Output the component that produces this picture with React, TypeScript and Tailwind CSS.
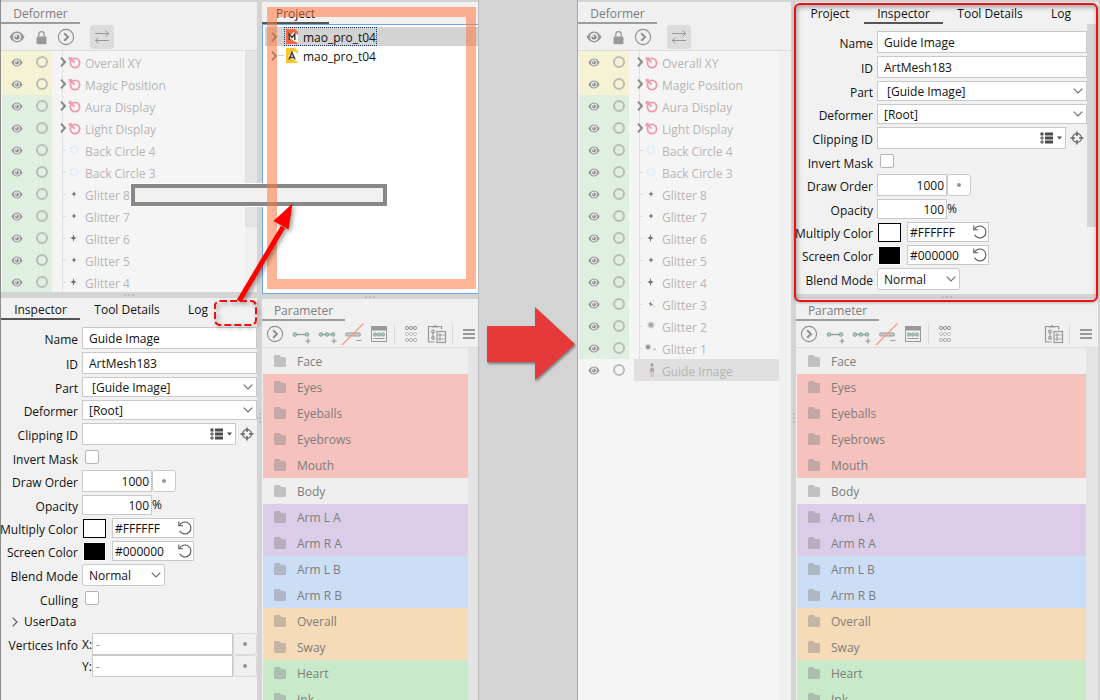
import React from "react";

type Tab = { label: string; width: string; active?: boolean };

const TEXT_DIM = "text-[#7d7d7d]";

function Tabs({ tabs, dim = false }: { tabs: Tab[]; dim?: boolean }) {
  return (
    <div role="tablist" className={`flex h-[22px] shrink-0 ${dim ? TEXT_DIM : "text-[#111111]"}`}>
      {tabs.map((t) => (
        <button
          key={t.label}
          type="button"
          role="tab"
          aria-selected={!!t.active}
          className={`${t.width} shrink-0 whitespace-nowrap border-b-2 pt-1 text-center ${
            t.active ? (dim ? "border-[#9d9d9d]" : "border-[#555555]") : "border-transparent"
          }`}
        >
          {t.label}
        </button>
      ))}
    </div>
  );
}

function Eye({ large = false }: { large?: boolean }) {
  return (
    <svg
      viewBox="0 0 16 12"
      className={large ? "h-[12px] w-[16px]" : "h-[9px] w-[12px]"}
      aria-hidden="true"
    >
      <path d="M0.5 6C2.6 2.3 5.1 0.6 8 0.6S13.4 2.3 15.5 6C13.4 9.7 10.9 11.4 8 11.4S2.6 9.7 0.5 6Z" fill="#999999" />
      <circle cx="8" cy="6" r="3.9" fill="#f4f4f4" />
      <circle cx="8" cy="6" r="2.6" fill="#8e8e8e" />
      <path d="M6 6a2 2 0 0 1 2-2v2z" fill="#f4f4f4" />
    </svg>
  );
}

function CircleChevron() {
  return (
    <svg viewBox="0 0 18 18" className="h-[18px] w-[18px]" fill="none" aria-hidden="true">
      <circle cx="9" cy="9" r="7.6" stroke="#8f8f8f" strokeWidth="1.1" />
      <path d="M7.2 5.2L11 9L7.2 12.8" stroke="#8f8f8f" strokeWidth="2" />
    </svg>
  );
}

function Down() {
  return (
    <svg
      viewBox="0 0 10 6"
      className="pointer-events-none absolute right-1 top-1/2 h-[6px] w-[10px] -translate-y-1/2"
      fill="none"
      aria-hidden="true"
    >
      <path d="M0.7 0.7L5 5L9.3 0.7" stroke="#6b6b6b" strokeWidth="1.1" />
    </svg>
  );
}

/* ---------- Deformer panel ---------- */

type Kind = "rotation" | "ring" | "spark" | "sparkBig" | "sparks" | "blob" | "blobs" | "figure";

const parts: { name: string; kind: Kind }[] = [
  { name: "Overall XY", kind: "rotation" },
  { name: "Magic Position", kind: "rotation" },
  { name: "Aura Display", kind: "rotation" },
  { name: "Light Display", kind: "rotation" },
  { name: "Back Circle 4", kind: "ring" },
  { name: "Back Circle 3", kind: "ring" },
  { name: "Glitter 8", kind: "spark" },
  { name: "Glitter 7", kind: "spark" },
  { name: "Glitter 6", kind: "sparkBig" },
  { name: "Glitter 5", kind: "spark" },
  { name: "Glitter 4", kind: "sparkBig" },
  { name: "Glitter 3", kind: "sparks" },
  { name: "Glitter 2", kind: "blob" },
  { name: "Glitter 1", kind: "blobs" },
  { name: "Guide Image", kind: "figure" },
];

function PartIcon({ kind }: { kind: Kind }) {
  return (
    <svg viewBox="0 0 16 16" className="h-4 w-4 shrink-0" fill="none" aria-hidden="true">
      {kind === "rotation" && (
        <g stroke="#ef9aaa" strokeWidth="1.8">
          <circle cx="9" cy="9" r="4.6" />
          <path d="M3 3.2L8.6 8.6" />
          <path d="M2.600 6L5.800 3.200" strokeWidth="1.4" />
        </g>
      )}
      {kind === "ring" && <circle cx="8" cy="8" r="3.6" stroke="#e6eef7" strokeWidth="2" />}
      {kind === "spark" && <path d="M8 5L8.7 7.3L10.6 8L8.7 8.7L8 11L7.3 8.7L5.4 8L7.3 7.3Z" fill="#6c6c6c" />}
      {kind === "sparkBig" && <path d="M7.5 4L8.3 7.1L10.8 8L8.3 8.9L7.5 12L6.7 8.9L4.2 8L6.7 7.1Z" fill="#6c6c6c" />}
      {kind === "sparks" && (
        <g>
          <path d="M7.500 5L8.400 7.400L10.200 8.400L8.400 9L7.800 10.800L7 8.600L5.200 7.800L7 7.200Z" fill="#7c7c7c" />
          <circle cx="10.4" cy="4.6" r="0.9" fill="#cccccc" />
          <circle cx="10.8" cy="10.4" r="0.9" fill="#cccccc" />
        </g>
      )}
      {kind === "blob" && (
        <g fill="#a6a6a6">
          <circle cx="8" cy="7" r="3.6" opacity="0.4" />
          <circle cx="8" cy="7" r="2.3" />
        </g>
      )}
      {kind === "blobs" && (
        <g fill="#969696">
          <circle cx="5" cy="7" r="2.9" opacity="0.4" />
          <circle cx="5" cy="7" r="1.9" />
          <circle cx="11.5" cy="9.2" r="1.2" opacity="0.5" />
        </g>
      )}
      {kind === "figure" && (
        <g>
          <path d="M6.500 3L9.200 1L11 3.400Z" fill="#8d8d9a" />
          <circle cx="9" cy="4" r="1.500" fill="#cdb3ae" />
          <path d="M7.600 6H10.600L11.400 9.400H6.800Z" fill="#9fa2b2" />
          <path d="M6 8.400L7.600 6.800V10.400H6.400Z" fill="#dcb4b4" />
          <path d="M8.200 9.500V15M10.200 9.500V15" stroke="#c9b0b0" strokeWidth="1" />
        </g>
      )}
    </svg>
  );
}

function PartRow({ name, kind, index }: { name: string; kind: Kind; index: number }) {
  const group = kind === "rotation";
  const selected = kind === "figure";
  const tint = index < 2 ? "bg-[#f5f3d3]" : selected ? "" : "bg-[#dfefe0]";
  return (
    <li className="flex h-[22px] shrink-0">
      <div className={`flex w-[50px] shrink-0 items-center pl-[9px] ${tint}`}>
        <button type="button" aria-label={`Show ${name}`} className="flex w-3 justify-center">
          <Eye />
        </button>
        <button type="button" aria-label={`Lock ${name}`} className="ml-[13px] h-3 w-3 rounded-full border-2 border-[#b9bdb6]" />
      </div>
      <div className={`ml-[5px] flex min-w-0 flex-1 items-center ${selected ? "bg-[#e0e0e0]" : ""}`}>
        <div className="flex h-full w-[9px] shrink-0 items-center">
          <span className="h-full w-[6px] shrink-0 border-r border-[#e0e0e0]" />
          {!group && !selected && <span className="h-px w-[3px] shrink-0 bg-[#dcdcdc]" />}
          {group && (
            <svg viewBox="0 0 7 12" className="h-3 w-[7px] shrink-0 -translate-x-[3px]" fill="none" aria-hidden="true">
              <path d="M1 1.6L5 6L1 10.4" stroke="#8a8a8a" strokeWidth="2" />
            </svg>
          )}
        </div>
        <PartIcon kind={kind} />
        <span className="ml-[3px] whitespace-nowrap pt-1 text-[#b5b5b5]">{name}</span>
      </div>
    </li>
  );
}

function DeformerPanel({ rows, thumb }: { rows: number; thumb: boolean }) {
  return (
    <section className="flex min-h-0 flex-1 flex-col bg-[#f0f0f0]">
      <Tabs dim tabs={[{ label: "Deformer", width: "w-[79px]", active: true }]} />
      <div className="flex h-[27px] shrink-0 items-center border-b border-[#dcdcdc] pl-2">
        <button type="button" aria-label="Toggle visibility" className="flex w-4 justify-center">
          <Eye large />
        </button>
        <button type="button" aria-label="Toggle lock" className="ml-2 flex w-4 justify-center">
          <svg viewBox="0 0 12 16" className="h-[15px] w-[11px]" aria-hidden="true">
            <path d="M3 7V4.6a3 3 0 0 1 6 0V7" fill="none" stroke="#999999" strokeWidth="1.4" />
            <rect x="0.6" y="7" width="10.8" height="8.4" rx="1.2" fill="#999999" />
          </svg>
        </button>
        <button type="button" aria-label="Expand" className="ml-2 flex w-[18px] justify-center">
          <CircleChevron />
        </button>
        <button
          type="button"
          aria-label="Swap"
          className="ml-[15px] flex h-6 w-6 items-center justify-center rounded-[3px] bg-[#dcdcdc]"
        >
          <svg viewBox="0 0 16 14" className="h-[14px] w-4" fill="none" stroke="#979797" aria-hidden="true">
            <path d="M1 3.500H14.500M11.500 0.500L14.600 3.500L11.500 6.500" />
            <path d="M15 10.500H1.500M4.500 7.500L1.400 10.500L4.500 13.500" />
          </svg>
        </button>
      </div>
      <div className="flex min-h-0 flex-1">
        <ul className="min-w-0 flex-1 overflow-hidden bg-[#f5f5f5] pl-px">
          {parts.slice(0, rows).map((p, i) => (
            <PartRow key={p.name} name={p.name} kind={p.kind} index={i} />
          ))}
        </ul>
        <div className="w-3 shrink-0 bg-[#f0f0f0]">{thumb && <div className="h-44 bg-[#e4e4e4]" />}</div>
      </div>
    </section>
  );
}

/* ---------- Inspector ---------- */

const FIELD = "min-w-0 border border-[#c9c9c9] bg-white text-[#111111] outline-none";

function Row({ label, id, h, children }: { label: string; id?: string; h: string; children: React.ReactNode }) {
  return (
    <div className={`flex ${h} shrink-0 items-center`}>
      <label htmlFor={id} className="flex w-[77px] shrink-0 justify-end whitespace-nowrap pt-1">
        {label}
      </label>
      <div className="ml-1 flex h-full min-w-0 flex-1 items-center">{children}</div>
    </div>
  );
}

function Dot({ label, flat = false }: { label: string; flat?: boolean }) {
  return (
    <button
      type="button"
      aria-label={label}
      className={`flex h-[22px] w-6 shrink-0 items-center justify-center rounded-[3px] border ${
        flat ? "border-[#dadada] bg-[#f0f0f0]" : "border-[#c9c9c9] bg-white"
      }`}
    >
      <span className="h-1 w-1 rounded-full bg-[#959595]" />
    </button>
  );
}

function ColorField({ id, value, swatch }: { id: string; value: string; swatch: string }) {
  return (
    <>
      <button type="button" aria-label="Pick color" className={`ml-px h-[19px] w-[23px] shrink-0 border ${swatch}`} />
      <div className="relative ml-[6px] h-full w-[82px] shrink-0">
        <input id={id} defaultValue={value} className={`h-full w-full pl-[2px] pr-5 ${FIELD}`} />
        <button type="button" aria-label="Reset color" className="absolute right-px top-[2px]">
          <svg viewBox="0 0 16 16" className="h-4 w-4" fill="none" stroke="#555555" strokeWidth="1.1" aria-hidden="true">
            <path d="M2.4 5.6A6 6 0 1 1 2.6 10.8" />
            <path d="M1.8 1.6V5.8H6" />
          </svg>
        </button>
      </div>
    </>
  );
}

function InspectorForm({ prefix, full }: { prefix: string; full: boolean }) {
  const id = (s: string) => `${prefix}-${s}`;
  return (
    <form className="flex min-w-0 flex-1 flex-col gap-[3px] pt-[7px]">
      <Row label="Name" id={id("name")} h="h-[22px]">
        <input id={id("name")} defaultValue="Guide Image" className={`h-full w-full px-[6px] pt-px ${FIELD}`} />
      </Row>
      <Row label="ID" id={id("id")} h="h-[22px]">
        <input id={id("id")} defaultValue="ArtMesh183" className={`h-full w-full px-[6px] pt-px ${FIELD}`} />
      </Row>
      <Row label="Part" id={id("part")} h="h-5">
        <div className="relative h-full w-full">
          <select id={id("part")} className={`h-full w-full appearance-none pl-[9px] pt-[2px] ${FIELD}`}>
            <option>[Guide Image]</option>
          </select>
          <Down />
        </div>
      </Row>
      <Row label="Deformer" id={id("deformer")} h="h-5">
        <div className="relative h-full w-full">
          <select id={id("deformer")} className={`h-full w-full appearance-none pl-[6px] pt-[2px] ${FIELD}`}>
            <option>[Root]</option>
          </select>
          <Down />
        </div>
      </Row>
      <Row label="Clipping ID" id={id("clip")} h="h-[22px]">
        <div className="relative h-full min-w-0 flex-1">
          <input id={id("clip")} className={`h-full w-full pl-[6px] pr-8 ${FIELD}`} />
          <button type="button" aria-label="Choose clipping ID" className="absolute right-[3px] top-[5px]">
            <svg viewBox="0 0 23 12" className="h-3 w-[23px]" aria-hidden="true">
              <g fill="#4a4a4a">
                <path d="M0.5 0.5h3v3h-3zM5 0.5h8v3H5zM5 4.5h8v3H5zM5 8.5h8v3H5z" />
                <path d="M17 4.5h5L19.500 7.500z" />
              </g>
              <path d="M1 5h2v2H1zM1 9h2v2H1z" fill="none" stroke="#4a4a4a" />
            </svg>
          </button>
        </div>
        <button type="button" aria-label="Pick on canvas" className="flex w-[21px] shrink-0 justify-center">
          <svg viewBox="0 0 14 14" className="h-[14px] w-[14px]" fill="none" stroke="#666666" strokeWidth="1.2" aria-hidden="true">
            <circle cx="7" cy="7" r="4.4" />
            <path d="M7 0.500V5M7 9v4.500M0.500 7H5M9 7h4.500" strokeWidth="1.500" />
          </svg>
        </button>
      </Row>
      <Row label="Invert Mask" id={id("invert")} h="h-[19px]">
        <input
          id={id("invert")}
          type="checkbox"
          className="mb-px ml-[3px] h-[14px] w-[14px] appearance-none rounded-[2px] border border-[#b4b4b4] bg-white"
        />
      </Row>
      <Row label="Draw Order" id={id("order")} h="h-[22px]">
        <input id={id("order")} defaultValue="1000" className={`h-full w-[70px] px-[2px] pt-px text-right ${FIELD}`} />
        <Dot label="Edit draw order" />
      </Row>
      <Row label="Opacity" id={id("opacity")} h="h-5">
        <input id={id("opacity")} defaultValue="100" className={`h-full w-[70px] px-[2px] pt-px text-right ${FIELD}`} />
        <span>%</span>
      </Row>
      <Row label="Multiply Color" id={id("multiply")} h="h-5">
        <ColorField id={id("multiply")} value="#FFFFFF" swatch="border-black bg-white" />
      </Row>
      <Row label="Screen Color" id={id("screen")} h="h-5">
        <ColorField id={id("screen")} value="#000000" swatch="border-white bg-black" />
      </Row>
      <Row label="Blend Mode" id={id("blend")} h="h-[22px]">
        <div className="relative h-full w-[83px]">
          <select id={id("blend")} className={`h-full w-full appearance-none rounded-[3px] pl-[6px] pt-[2px] ${FIELD}`}>
            <option>Normal</option>
          </select>
          <Down />
        </div>
      </Row>
      {full && (
        <>
          <Row label="Culling" id={id("culling")} h="h-[19px]">
            <input
              id={id("culling")}
              type="checkbox"
              className="mb-px ml-[3px] h-[14px] w-[14px] appearance-none rounded-[2px] border border-[#b4b4b4] bg-white"
            />
          </Row>
          <button type="button" className="flex h-[19px] shrink-0 items-center pl-[11px] pt-[3px] text-left">
            <svg viewBox="0 0 6 10" className="mr-[6px] h-[10px] w-[6px]" fill="none" aria-hidden="true">
              <path d="M0.700 0.700L5 5L0.700 9.300" stroke="#555555" strokeWidth="1.100" />
            </svg>
            UserData
          </button>
          <div className="flex flex-col">
            <Row label="Vertices Info" h="h-[22px]">
              <label htmlFor={id("x")} className="w-[10px] shrink-0 pt-[2px]">X:</label>
              <input id={id("x")} defaultValue="-" className="h-full w-full min-w-0 flex-1 border border-[#c9c9c9] bg-white px-[3px] text-[#999999]" />
              <Dot label="Edit X" flat />
            </Row>
            <Row label="" h="h-[22px]">
              <label htmlFor={id("y")} className="w-[10px] shrink-0 pt-[2px]">Y:</label>
              <input id={id("y")} defaultValue="-" className="h-full w-full min-w-0 flex-1 border border-[#c9c9c9] bg-white px-[3px] text-[#999999]" />
              <Dot label="Edit Y" flat />
            </Row>
          </div>
        </>
      )}
    </form>
  );
}

/* ---------- Parameter panel ---------- */

const groups = [
  { name: "Face", tint: "bg-[#efefef]" },
  { name: "Eyes", tint: "bg-[#f5c2be]" },
  { name: "Eyeballs", tint: "bg-[#f5c2be]" },
  { name: "Eyebrows", tint: "bg-[#f5c2be]" },
  { name: "Mouth", tint: "bg-[#f5c2be]" },
  { name: "Body", tint: "bg-[#efefef]" },
  { name: "Arm L A", tint: "bg-[#dbcce8]" },
  { name: "Arm R A", tint: "bg-[#dbcce8]" },
  { name: "Arm L B", tint: "bg-[#ccdef5]" },
  { name: "Arm R B", tint: "bg-[#ccdef5]" },
  { name: "Overall", tint: "bg-[#f5dbb8]" },
  { name: "Sway", tint: "bg-[#f5dbb8]" },
  { name: "Heart", tint: "bg-[#c8eac9]" },
  { name: "Ink", tint: "bg-[#c8eac9]" },
];

function ToolButton({ label, children }: { label: string; children: React.ReactNode }) {
  return (
    <button type="button" aria-label={label} className="flex h-[26px] w-[26px] shrink-0 items-center justify-center">
      {children}
    </button>
  );
}

function Rings({ xs, y, r = 1.6 }: { xs: number[]; y: number; r?: number }) {
  return (
    <>
      {xs.map((x) => (
        <circle key={x} cx={x} cy={y} r={r} />
      ))}
    </>
  );
}

function ParameterToolbar({ pad }: { pad: string }) {
  const svg = "h-[24px] w-[24px]";
  return (
    <div className={`flex h-[27px] shrink-0 items-center border-b border-[#dcdcdc] ${pad}`}>
      <ToolButton label="Expand">
        <CircleChevron />
      </ToolButton>
      <ToolButton label="Add two keys">
        <svg viewBox="0 0 24 24" className={svg} fill="none" stroke="#999999" aria-hidden="true">
          <path d="M6 12.500h11" strokeWidth="1.400" />
          <g fill="#86dcc0">
            <Rings xs={[6, 18]} y={12.5} r={1.8} />
          </g>
          <path d="M19 16.500v5M16.500 19h5" strokeWidth="1.200" />
        </svg>
      </ToolButton>
      <ToolButton label="Add three keys">
        <svg viewBox="0 0 24 24" className={svg} fill="none" stroke="#999999" aria-hidden="true">
          <path d="M6 12.500h11" strokeWidth="1.400" />
          <g fill="#86dcc0">
            <Rings xs={[6, 12, 18]} y={12.5} r={1.8} />
          </g>
          <path d="M19 16.500v5M16.500 19h5" strokeWidth="1.200" />
        </svg>
      </ToolButton>
      <ToolButton label="Remove keys">
        <svg viewBox="0 0 24 24" className={svg} fill="none" stroke="#999999" aria-hidden="true">
          <rect x="4.500" y="11" width="15" height="3" rx="1.500" fill="#cccccc" />
          <path d="M1 23L22.500 1.500" stroke="#f79a86" strokeWidth="1.200" />
          <path d="M15.500 18.500h5" />
        </svg>
      </ToolButton>
      <ToolButton label="Key list">
        <svg viewBox="0 0 24 24" className={svg} fill="none" stroke="#999999" aria-hidden="true">
          <rect x="4.500" y="4.500" width="15" height="15" fill="#f0f0f0" />
          <path d="M4 4h16v4.500H4z" fill="#999999" stroke="none" />
          <g fill="#86dcc0">
            <Rings xs={[8, 12, 16]} y={12.5} />
          </g>
          <path d="M6.500 16.500h11" />
        </svg>
      </ToolButton>
      <span className="ml-[2px] mr-[3px] h-5 w-px shrink-0 bg-[#dadada]" />
      <ToolButton label="Key grid">
        <svg viewBox="0 0 24 24" className={svg} fill="none" aria-hidden="true">
          <g stroke="#909090">
            <Rings xs={[8, 12, 16]} y={6} />
          </g>
          <g stroke="#c6c6c6">
            <Rings xs={[8, 12, 16]} y={12} />
          </g>
          <g stroke="#b2b2b2">
            <Rings xs={[8, 12, 16]} y={18} />
          </g>
        </svg>
      </ToolButton>
      <div className="ml-auto flex items-center">
        <ToolButton label="Paste keys">
          <svg viewBox="0 0 24 24" className={svg} fill="none" stroke="#999999" strokeWidth="1.200" aria-hidden="true">
            <path d="M7 4.500H3.500v15.500h6M13 4.500h3.500v3" />
            <path d="M6.500 5.500V4h2L10 2.800 11.500 4h2v1.500z" fill="#999999" stroke="none" />
            <path d="M8 10v5" />
            <circle cx="8" cy="9.500" r="1.300" />
            <circle cx="8" cy="16" r="1.300" />
            <rect x="12" y="9.500" width="8.500" height="11" fill="#f0f0f0" />
            <path d="M14 12h2v2h-2zM14 16h2v2h-2z" strokeWidth="1" />
            <path d="M17.500 13h2M17.500 17h2" />
          </svg>
        </ToolButton>
        <span className="ml-[2px] mr-[7px] h-5 w-px shrink-0 bg-[#dadada]" />
        <button type="button" aria-label="Menu" className="flex w-[18px] flex-col items-center gap-[2px]">
          <span className="h-[2px] w-3 bg-[#999999]" />
          <span className="h-[2px] w-3 bg-[#999999]" />
          <span className="h-[2px] w-3 bg-[#999999]" />
        </button>
      </div>
    </div>
  );
}

function ParameterPanel({ bar, pad }: { bar: string; pad: string }) {
  return (
    <section className="flex min-h-0 flex-1 flex-col bg-[#f0f0f0]">
      <Tabs dim tabs={[{ label: "Parameter", width: "w-[83px]", active: true }]} />
      <ParameterToolbar pad={pad} />
      <div className="flex min-h-0 flex-1 pl-px">
        <ul className="min-w-0 flex-1 overflow-hidden">
          {groups.map((g) => (
            <li key={g.name} className={`flex h-[26px] items-center pl-[11px] text-[#7d7d7d] ${g.tint}`}>
              <svg viewBox="0 0 12 12" className="h-3 w-3 shrink-0" aria-hidden="true">
                <path
                  d="M1.500 0h4l1.800 2h3.200A1.500 1.500 0 0 1 12 3.500v7a1.500 1.500 0 0 1-1.500 1.500h-9A1.500 1.500 0 0 1 0 10.500v-9A1.500 1.500 0 0 1 1.500 0z"
                  fill="#8a8a8a"
                  opacity="0.45"
                />
              </svg>
              <span className="ml-[11px] whitespace-nowrap pt-[2px]">{g.name}</span>
            </li>
          ))}
        </ul>
        <div className={`${bar} shrink-0 bg-[#e4e4e4]`} />
      </div>
    </section>
  );
}

/* ---------- Project panel ---------- */

function ProjectItem({ letter, fill, selected = false }: { letter: string; fill: string; selected?: boolean }) {
  return (
    <li className={`ml-[2px] flex h-[19px] items-center pl-[6px] ${selected ? "bg-[#d3d3d3]" : ""}`}>
      <svg viewBox="0 0 7 12" className="h-3 w-[7px] shrink-0" fill="none" aria-hidden="true">
        <path d="M1 1.600L5 6L1 10.400" stroke="#777777" strokeWidth="2" />
      </svg>
      <span className="h-px w-[6px] bg-[#cccccc]" />
      <span
        className={`flex h-full items-center border border-dotted ${
          selected ? "border-[#113366]" : "border-transparent"
        }`}
      >
        <svg viewBox="0 0 14 17" className="h-[17px] w-[14px] shrink-0" aria-hidden="true">
          <path d="M1 1h9l3 3v12H1z" fill={fill} />
          <path d="M9 4L13 7V15L9 13L3 9z" fill="#ffffff" />
          {letter === "M" ? (
            <path d="M4.200 12V6L7 9.500L9.800 6V12" fill="none" stroke="#444444" strokeWidth="1.500" />
          ) : (
            <path d="M4 12.500L7 5.500L10 12.500M5.200 10.400H8.800" fill="none" stroke="#444444" strokeWidth="1.500" />
          )}
        </svg>
        <span className="ml-[4px] whitespace-nowrap pt-[2px]">mao_pro_t04</span>
      </span>
    </li>
  );
}

/* ---------- Splitters ---------- */

function HSplit({ h }: { h: string }) {
  return (
    <div className={`flex ${h} shrink-0 items-center justify-center gap-[2px] bg-[#d4d4d4]`}>
      {[0, 1, 2].map((i) => (
        <span key={i} className="h-[2px] w-[2px] bg-[#bcbcbc]" />
      ))}
    </div>
  );
}

function VSplit() {
  return (
    <div className="flex w-[5px] shrink-0 flex-col items-center gap-[2px] bg-[#d4d4d4] pt-[411px]">
      {[0, 1, 2].map((i) => (
        <span key={i} className="h-[2px] w-[2px] bg-[#bcbcbc]" />
      ))}
    </div>
  );
}

export default function App() {
  return (
    <main className="grid h-screen w-full grid-cols-[479fr_98fr_523fr] overflow-hidden bg-[#d4d4d4] font-['Open_Sans','Noto_Sans',sans-serif] text-[12px] leading-4 text-[#111111]">
      <div className="relative flex min-h-0 min-w-0 border-l border-r border-l-[#8c8c8c] border-r-[#bdbdbd] pt-[2px]">
        <div className="flex w-[256px] shrink-0 flex-col">
          <div className="flex h-[290px] shrink-0 flex-col">
            <DeformerPanel rows={11} thumb />
          </div>
          <HSplit h="h-[6px]" />
          <section className="flex min-h-0 flex-1 flex-col bg-[#f1f1f1]">
            <Tabs
              tabs={[
                { label: "Inspector", width: "w-[79px]", active: true },
                { label: "Tool Details", width: "w-[94px]" },
                { label: "Log", width: "w-[48px]" },
              ]}
            />
            <InspectorForm prefix="a" full />
          </section>
        </div>
        <VSplit />
        <div className="flex min-w-0 flex-1 flex-col">
          <section className="flex h-[292px] shrink-0 flex-col bg-[#f1f1f1]">
            <Tabs tabs={[{ label: "Project", width: "w-[67px]", active: true }]} />
            <ul className="flex-1 border border-r-0 border-[#6ea4e8] bg-white pt-[2px]">
              <ProjectItem letter="M" fill="#f9683f" selected />
              <ProjectItem letter="A" fill="#fcc72c" />
            </ul>
          </section>
          <HSplit h="h-[5px]" />
          <ParameterPanel bar="w-[10px]" pad="" />
        </div>

        <div className="absolute left-[130px] top-[184px] h-[22px] w-[256px] border-4 border-[#888888] bg-[#f1f1f1] outline outline-white" />
        <div className="pointer-events-none absolute left-[266px] right-[2px] top-[7px] h-[282px] border-[10px] border-[#ff7740]/55" />
        <svg
          viewBox="0 0 100 140"
          className="pointer-events-none absolute left-[209px] top-[194px] h-[140px] w-[100px] drop-shadow-[2px_2px_2px_rgba(0,0,0,0.4)]"
          aria-hidden="true"
        >
          <rect x="5" y="107" width="41" height="24" rx="5" fill="none" stroke="#ee1111" strokeWidth="2" strokeDasharray="7 3" />
          <path d="M29 107L73 33" stroke="#ff0000" strokeWidth="5" />
          <path d="M82.500 9.500L63.500 27L78.500 35.500Z" fill="#ff0000" />
        </svg>
      </div>

      <div className="flex min-w-0 items-start justify-center pt-[304px]">
        <svg
          viewBox="0 0 94 80"
          className="h-20 w-[94px] shrink-0 translate-x-1 drop-shadow-[1px_2px_1px_rgba(0,0,0,0.4)]"
          aria-hidden="true"
        >
          <path d="M2 22H50V3L90 40L50 76V58H2Z" fill="#e63939" />
        </svg>
      </div>

      <div className="relative flex min-h-0 min-w-0 border-l border-[#a8a8a8] pr-[2px] pt-[2px]">
        <div className="flex w-[213px] shrink-0 flex-col">
          <DeformerPanel rows={15} thumb={false} />
        </div>
        <VSplit />
        <div className="flex min-w-0 flex-1 flex-col">
          <section className="flex h-[292px] shrink-0 flex-col bg-[#f1f1f1]">
            <Tabs
              tabs={[
                { label: "Project", width: "w-[68px]" },
                { label: "Inspector", width: "w-[79px]", active: true },
                { label: "Tool Details", width: "w-[94px]" },
                { label: "Log", width: "w-[48px]" },
              ]}
            />
            <div className="flex min-h-0 flex-1">
              <InspectorForm prefix="b" full={false} />
              <div className="w-[11px] shrink-0">
                <div className="h-[203px] bg-[#d6d6d6]" />
              </div>
            </div>
          </section>
          <HSplit h="h-[5px]" />
          <ParameterPanel bar="w-3" pad="pr-[3px]" />
        </div>
        <div className="pointer-events-none absolute left-[216px] right-[2px] top-[3px] h-[299px] rounded-[6px] border-2 border-[#ee1111] shadow-[0_1px_3px_rgba(0,0,0,0.25),inset_1px_2px_5px_rgba(0,0,0,0.35)]" />
      </div>
    </main>
  );
}
